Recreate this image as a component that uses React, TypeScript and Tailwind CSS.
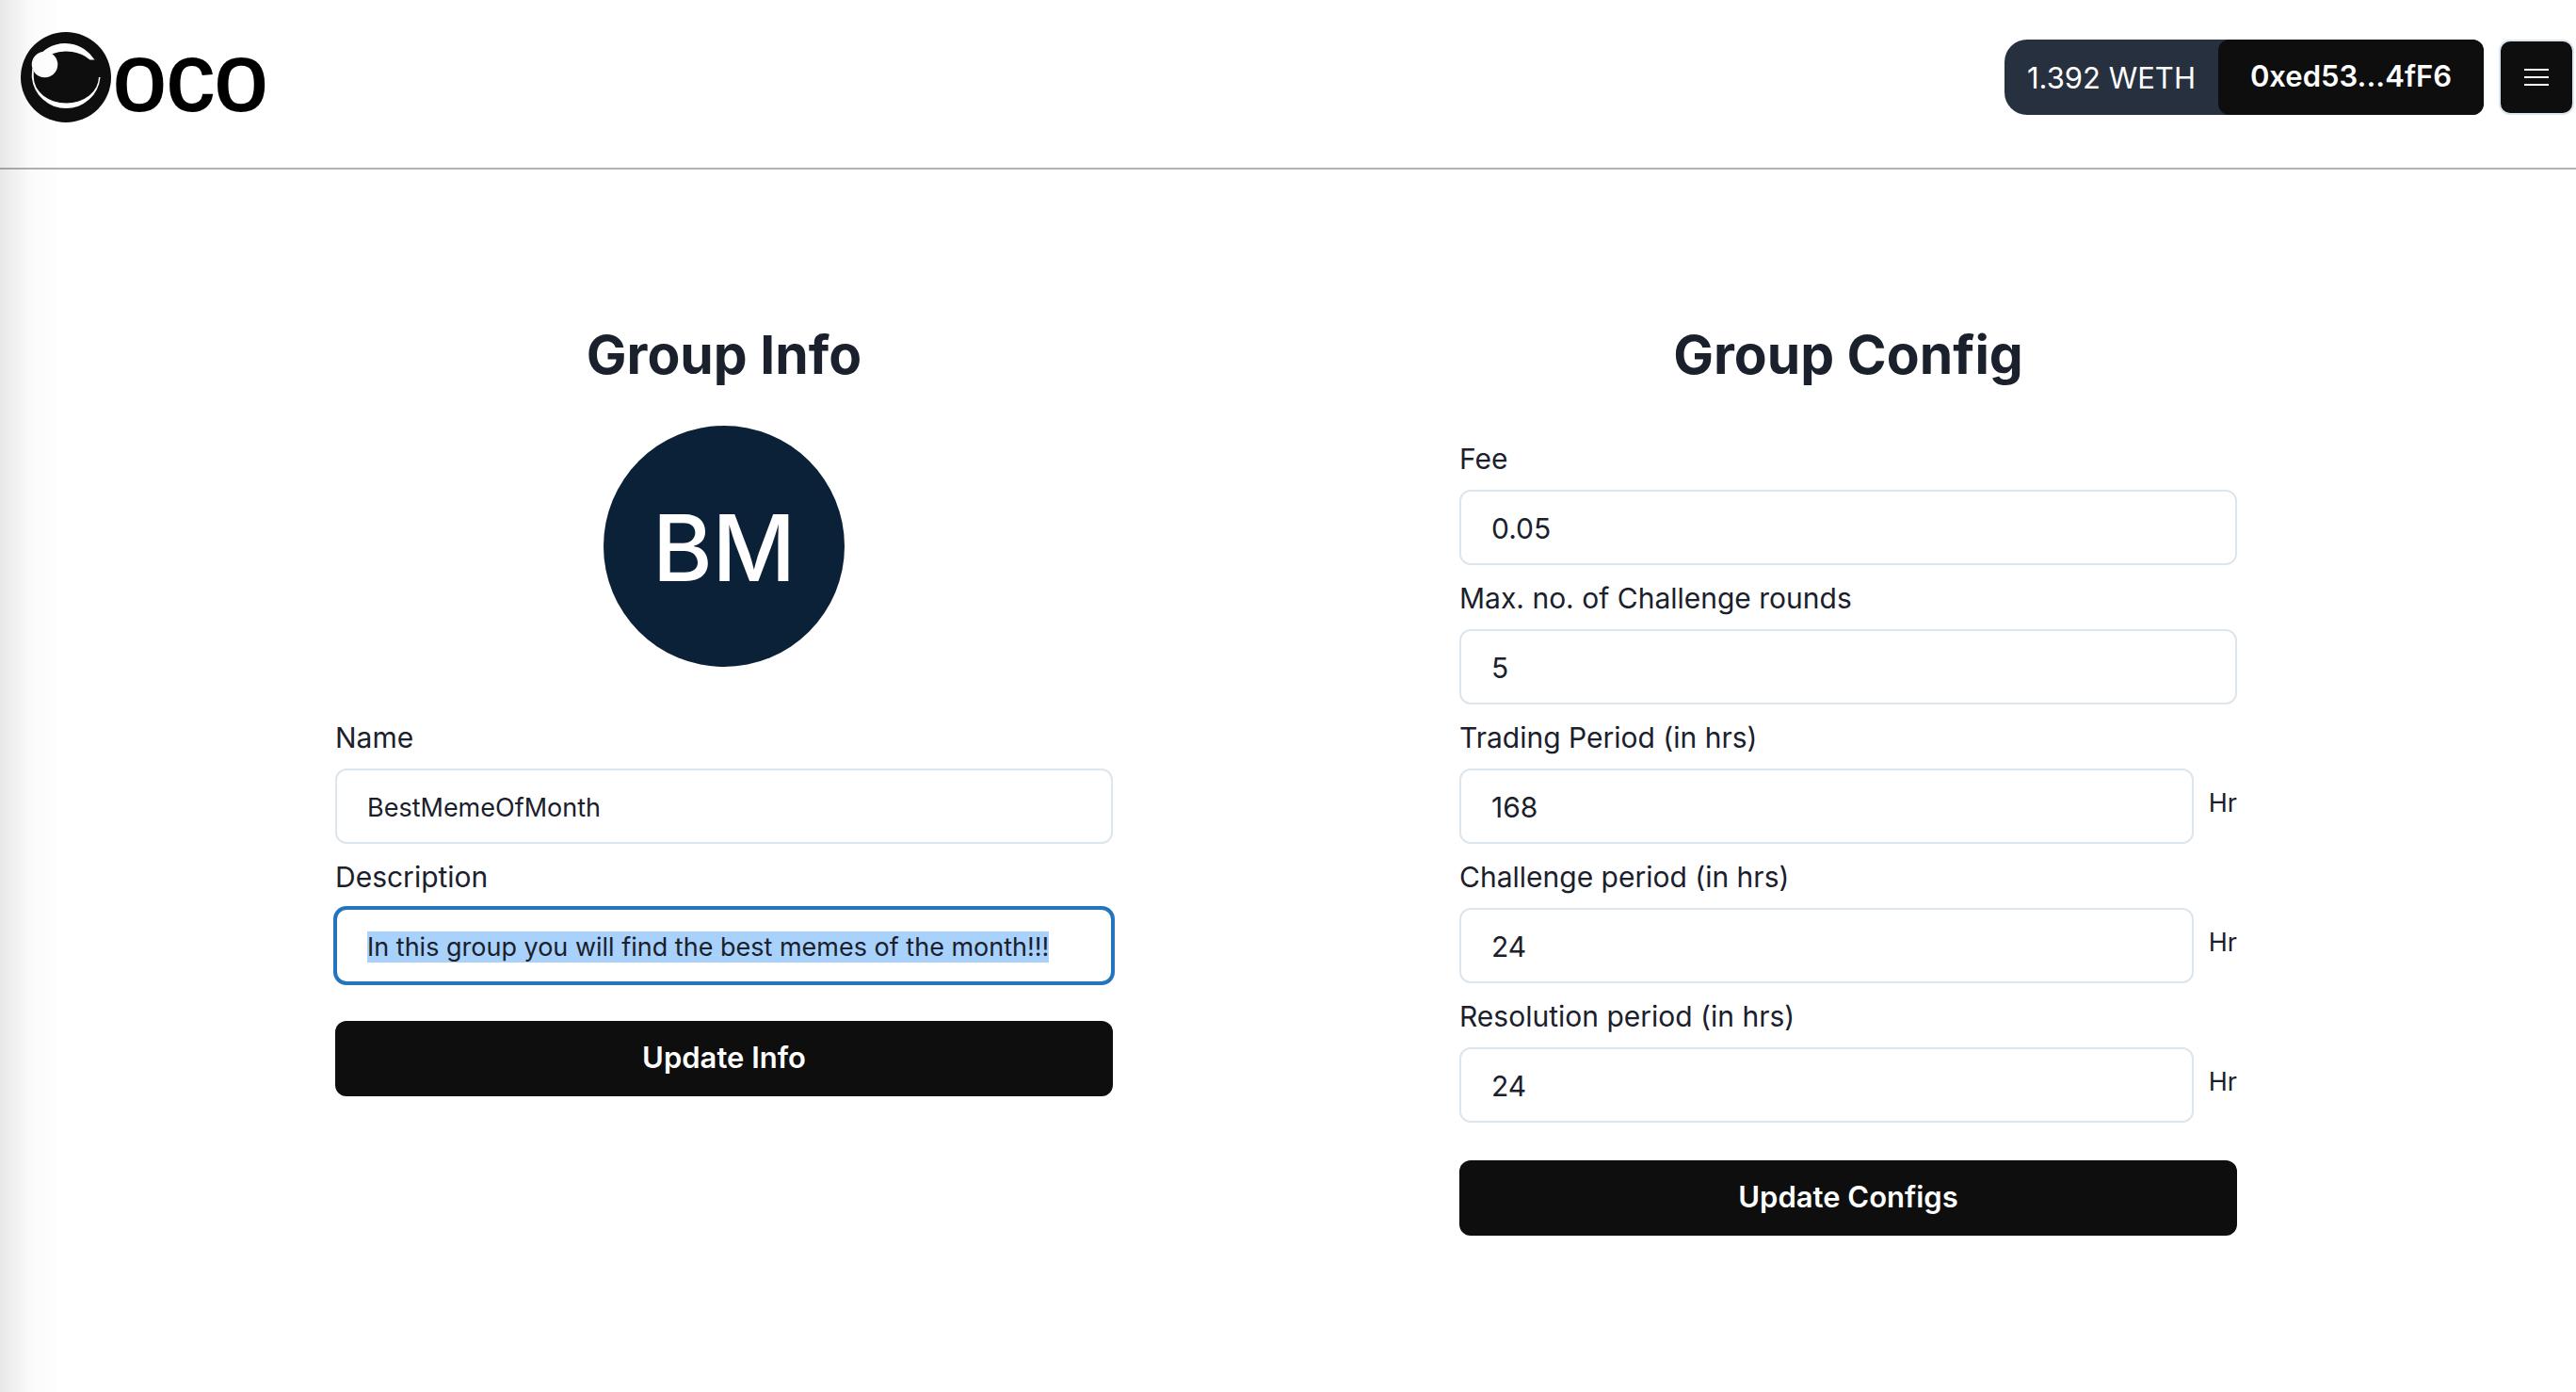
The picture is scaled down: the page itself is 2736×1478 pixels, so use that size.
import { useEffect, useRef } from "react";

function Logo() {
  return (
    <a href="#" aria-label="oco home" className="flex items-center gap-0.5">
      <svg viewBox="66 102 286 286" className="h-24 w-24" aria-hidden="true">
        <circle cx="209" cy="245" r="143" fill="#0e0e0e" />
        <path d="M135 165 A109 109 0 0 1 300 190 L285 190 A103 82 0 0 0 165 171 Z" fill="#fff" />
        <circle cx="142" cy="205" r="41" fill="#fff" />
        <path d="M103 215 Q101 230 101 245 A109 109 0 0 0 318 245 L313 245 A103 82 0 0 1 107 245 L107 225 Z" fill="#fff" />
      </svg>
      <span
        aria-hidden="true"
        className="block font-['Liberation_Sans',sans-serif] text-[102px] leading-24 text-black [-webkit-text-stroke:2px_#000]"
      >
        oco
      </span>
    </a>
  );
}

function Header() {
  return (
    <header className="flex h-[180px] items-start justify-between border-b-2 border-[#b1b1b1] pr-0.5 pl-[22px]">
      <div className="pt-[34px]">
        <Logo />
      </div>
      <div className="flex gap-4 pt-[42px]">
        <div className="flex h-20 rounded-l-3xl rounded-r-xl bg-[#27303f]">
          <span className="flex items-center px-6 pt-0.5 text-[31px] text-white">1.392 WETH</span>
          <button className="rounded-xl bg-[#0e0e0e] px-[34px] pb-0.5 text-[31px] font-semibold text-white">
            0xed53...4fF6
          </button>
        </div>
        <button
          aria-label="Menu"
          className="flex h-20 w-20 items-center justify-center rounded-xl border-2 border-[#dde5ed] bg-[#0e0e0e]"
        >
          <svg viewBox="0 0 28 20" className="h-5 w-7" stroke="#fff" strokeWidth="2" aria-hidden="true">
            <path d="M1 2H27M1 10H27M1 18H27" />
          </svg>
        </button>
      </div>
    </header>
  );
}

type FieldProps = {
  id: string;
  label: string;
  value: string;
  unit?: string;
  small?: boolean;
  selected?: boolean;
};

function Field({ id, label, value, unit, small, selected }: FieldProps) {
  const ref = useRef<HTMLInputElement>(null);

  useEffect(() => {
    if (selected && ref.current) {
      ref.current.focus();
      ref.current.select();
    }
  }, [selected]);

  return (
    <div className="flex flex-col">
      <label htmlFor={id} className="flex h-17 items-center pt-0.5 text-[30px] leading-9">
        {label}
      </label>
      <div className="flex gap-4">
        <input
          ref={ref}
          id={id}
          type="text"
          defaultValue={value}
          className={
            "h-20 w-full min-w-0 flex-1 rounded-xl border-2 border-[#dde5ed] bg-white px-8 pt-0.5 leading-[34px] outline-none selection:bg-[#a8d1fb] selection:text-[#1a202c] focus:border-[#2474be] focus:ring-2 focus:ring-[#2474be] " +
            (small ? "text-[27px]" : "text-[30px]")
          }
        />
        {unit && <span className="pt-[21px] text-[27px] leading-8">{unit}</span>}
      </div>
    </div>
  );
}

function SubmitButton({ children }: { children: string }) {
  return (
    <button
      type="submit"
      className="mt-10 h-20 w-full rounded-xl bg-[#0e0e0e] pb-0.5 text-[31px] font-semibold text-white"
    >
      {children}
    </button>
  );
}

export default function App() {
  return (
    <div className="relative min-h-screen bg-white font-['Inter',sans-serif] text-[#1a202c]">
      <Header />
      <main className="grid grid-cols-2 pt-[160px] pr-[176px] pl-[172px]">
        <form className="mx-auto w-full max-w-[826px]" onSubmit={(e) => e.preventDefault()}>
          <h1 className="text-center text-[57px] leading-[74px] font-bold">Group Info</h1>
          <div className="mx-auto mt-[38px] mb-10 flex size-64 items-center justify-center rounded-full bg-[#0a2138] pt-1 text-[97px] font-medium text-white">
            BM
          </div>
          <Field id="name" label="Name" value="BestMemeOfMonth" small />
          <Field id="description" label="Description" value="In this group you will find the best memes of the month!!!" small selected />
          <SubmitButton>Update Info</SubmitButton>
        </form>
        <form className="mx-auto w-full max-w-[826px]" onSubmit={(e) => e.preventDefault()}>
          <h1 className="mb-[38px] text-center text-[57px] leading-[74px] font-bold">Group Config</h1>
          <Field id="fee" label="Fee" value="0.05" />
          <Field id="rounds" label="Max. no. of Challenge rounds" value="5" />
          <Field id="trading" label="Trading Period (in hrs)" value="168" unit="Hr" />
          <Field id="challenge" label="Challenge period (in hrs)" value="24" unit="Hr" />
          <Field id="resolution" label="Resolution period (in hrs)" value="24" unit="Hr" />
          <SubmitButton>Update Configs</SubmitButton>
        </form>
      </main>
      <div className="pointer-events-none absolute inset-y-0 left-0 w-16 bg-linear-to-r from-black/9 via-black/2 to-transparent" />
    </div>
  );
}
